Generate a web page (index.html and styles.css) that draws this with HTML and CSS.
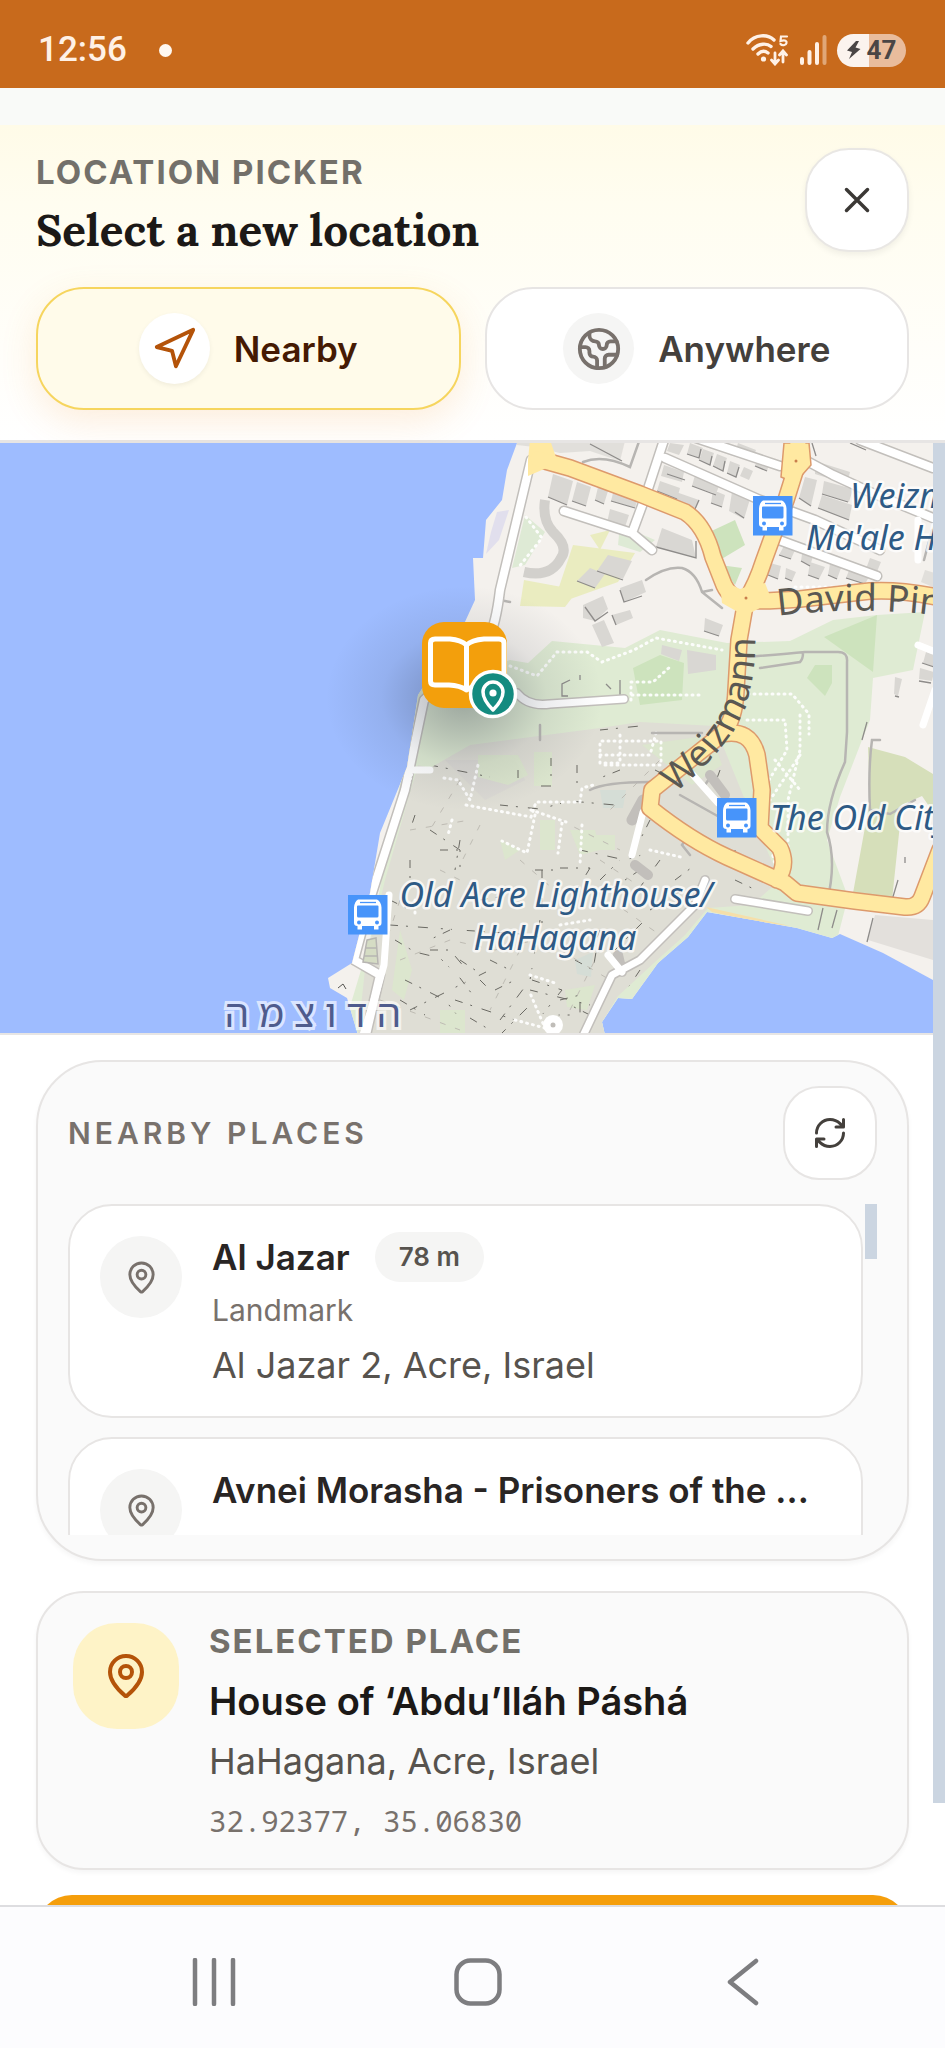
FILE: index.html
```html
<!DOCTYPE html>
<html lang="en">
<head>
<meta charset="utf-8">
<meta name="viewport" content="width=device-width, initial-scale=1">
<title>Select a new location</title>
<link rel="stylesheet" href="styles.css">
</head>
<body>
<div class="app">
  <div class="status">
    <div class="status-left"><time>12:56</time><span class="status-dot"></span></div>
    <div class="status-right">
      <svg width="44" height="32" viewBox="0 0 44 32" fill="none" stroke="#fff1e6" stroke-width="3.4" stroke-linecap="round" aria-hidden="true">
        <path d="M2 9C9 0 22 0 28 6M7 15C13 9 21 9 25 12.500M12 20q5-5 10-1"/>
        <circle cx="17.500" cy="25" r="2.600" fill="#fff1e6" stroke="none"/>
        <path d="M29 19v10M25.500 26l3.500 4 3.500-4M37 28V18M33.500 21l3.500-4 3.500 4" stroke-width="2.800"/>
        <path d="M41 2.500h-6l-.5 4.500c5-1.500 6.500 0 6 2-.5 2.500-4.500 3-6 1" stroke-width="2.200"/>
      </svg>
      <svg width="27" height="30" viewBox="0 0 27 30" stroke="#fff1e6" stroke-width="4" stroke-linecap="round" aria-hidden="true">
        <path d="M2 24v4M9.500 17v11M17 9v19"/><path d="M24.500 2v26" opacity=".45"/>
      </svg>
      <div class="battery">
        <svg width="14" height="18" viewBox="0 0 14 18" aria-hidden="true"><path d="M9 0 0 9.500l5 1.500-3 7 11.500-10-5-1.500L12 0z" fill="#4a4545"/></svg>
        <span>47</span>
      </div>
    </div>
  </div>

  <header class="head">
    <div class="head-row">
      <div>
        <p class="eyebrow">LOCATION PICKER</p>
        <h1>Select a new location</h1>
      </div>
      <button class="close" type="button" aria-label="Close">
        <svg class="icon" width="42" height="42" viewBox="0 0 24 24"><path d="M18 6 6 18M6 6l12 12"/></svg>
      </button>
    </div>
    <div class="modes">
      <button class="mode active" type="button" aria-pressed="true">
        <span class="mode-icon"><svg class="icon" width="46" height="46" viewBox="0 0 24 24"><path d="M3 11 22 2 13 21 11 13z"/></svg></span>
        Nearby
      </button>
      <button class="mode" type="button" aria-pressed="false">
        <span class="mode-icon"><svg class="icon" width="46" height="46" viewBox="0 0 24 24"><path d="M21.540 15H17a2 2 0 0 0-2 2v4.540M7 3.340V5a3 3 0 0 0 3 3 2 2 0 0 1 2 2c0 1.100.9 2 2 2a2 2 0 0 0 2-2c0-1.100.9-2 2-2h3.170M11 21.950V18a2 2 0 0 0-2-2 2 2 0 0 1-2-2v-1a2 2 0 0 0-2-2H2.050"/><circle cx="12" cy="12" r="10"/></svg></span>
        Anywhere
      </button>
    </div>
  </header>

  <main class="scroll">
    <div class="content">
      <div class="map">
        <svg class="map-art" viewBox="0 443 933 590" preserveAspectRatio="xMidYMid slice" role="img" aria-label="Map of Acre">
          <defs>
            <g id="bus">
              <rect width="39.500" height="39.500" fill="#4794fa"/>
              <path fill="#fff" fill-rule="evenodd" d="M10 4.500h19q4 2 4.500 8V28q0 3-3 3v3.500h-4.500V31h-12v3.500H9.500V31q-3.500 0-3.500-3V12.500q.5-6 4-8zM9 11.500v9.500q0 1.500 1.500 1.500h18.500q1.500 0 1.500-1.500v-9.500q0-1-1-1H10q-1 0-1 1z"/>
              <path d="M12 7.500h16" stroke="#4794fa" stroke-width="1.300"/>
              <circle cx="11" cy="27.500" r="2" fill="#4794fa"/><circle cx="29" cy="27.500" r="2" fill="#4794fa"/>
            </g>
            <radialGradient id="shade"><stop offset="0" stop-color="#333c4c" stop-opacity=".4"/><stop offset=".3" stop-color="#333c4c" stop-opacity=".25"/><stop offset=".6" stop-color="#333c4c" stop-opacity=".09"/><stop offset="1" stop-color="#333c4c" stop-opacity="0"/></radialGradient>
            <clipPath id="town"><path d="M418 720 430 768 470 745 600 728 640 722 715 726 745 800 780 880 752 905 708 908 685 935 655 962 618 996 602 1022 605 1035H358L366 960 385 880z"/></clipPath>
            <clipPath id="land"><path d="M517 443 507 470 502 500 486 520 483 558H473L475 600 464 624 418 695 407 767 380 833 370 893 352 963 328 978 330 988 347 998 358 1035H605L602 1022 618 998 632 999 658 963 688 937 707 912 753 920 797 928 832 938 840 934 883 953 933 980V443z"/></clipPath>
            <path id="p-weiz" d="M675 793Q736 743 748 698T752 600"/>
            <path id="p-david" d="M778 616Q870 604 960 619"/>
            <path id="main" d="M538 459 570 468 640 494 685 512Q705 525 713 557L724 585Q730 598 746 604M798 440 797 465 786 500 764 560Q756 585 746 600M746 600Q760 602 800 599L870 591Q905 589 950 600M746 600 739 640 736 690Q735 720 722 734L652 790 650 808Q690 840 727 857L785 883 797 893 855 901 905 907Q918 908 922 897L940 850M722 734Q750 728 757 755L762 790 760 828 780 848Q788 865 777 880"/>
          </defs>
          <rect y="443" width="933" height="592" fill="#9ebcff"/>
          <g clip-path="url(#land)">
            <path d="M300 443H940V1040H300z" fill="#f4f1ed"/>
            <path d="M418 690 510 660 528 663 552 641 625 648 660 630 727 643 790 641 833 620 877 615 925 612 913 670 873 678 870 720 862 740 840 797 827 840 848 897 837 940 700 940 600 1040H340L370 940z" fill="#dfebd3"/>
            <path d="M418 765 430 768 470 745 600 728 640 722 715 726 745 800 780 880 752 905 708 908 685 935 655 962 618 996 602 1022 605 1035H358L366 960 385 880z" fill="#dfded5"/>
            <path d="M877 615 824 637 873 672zM640 705 633 668 660 655 684 663 682 700zM703 535 735 520 745 545 720 560zM720 565 742 568 735 585zM807 678l8-13h17v18l-7 13z" fill="#cde3bd"/>
            <path d="M525 515 545 532 525 565 512 568zM620 525 655 540 640 552 618 545z" fill="#deead5"/>
            <path d="M573 545 635 553 618 582 562 602 558 590zM524 580 578 590 565 607 520 606zM590 535 610 530 600 550z" fill="#eaecc0"/>
            <path d="M868 747 905 757 933 774V812L922 796 902 805 892 900 853 893 870 800z" fill="#d6dfba"/>
            <path d="M875 915 933 920V960L868 940z" fill="#e3e0dc"/>
            <path d="M706 907 790 926 758 922 712 912z" fill="#f5dfaa"/>
            <path d="M497 512l12-2-10 30-13 14 5-22z" fill="#e1dfed"/>
            <g fill="#d9d7d3">
              <path d="M553 474l20 7-6 24-19-8zM577 482l14 5-5 19-14-5zM598 487l10 4-4 13-9-4zM614 489l24 8-3 11-24-7zM664 465l20 7-2 10-21-6zM660 481l20 7-3 11-20-8zM695 475l25 8-4 11-24-8zM690 443l13 5-4 10-12-4zM703 449l11 4-4 12-11-5zM717 454l10 4-4 13-10-5zM730 461l10 4-4 12-9-4zM744 467l9 4-4 9-9-4zM670 443l14 2-5 10-12-4zM738 443l18 7-4 11-17-8zM759 454l12 4-4 13-12-5zM676 492l23 8-4 10-23-9zM713 490l12 5-3 12-11-4zM732 492l18 7-6 20-15-8zM805 477l12 3-6 26-12-8zM824 481l29 8-4 13-27-8zM822 495l30 10-3 15-31-12zM784 546l11 4-4 9-12-4zM803 548l11 5-4 13-9-5zM810 562l15 5-6 12-11-4zM830 564l11 4-4 11-9-4zM850 568l20 7-5 9-19-6zM870 558l11 4-5 12-10-5zM770 563l11 3-3 13-10-4zM786 568l10 4-4 9-7-3zM610 509l19 6-5 15-17-7zM662 528l30 12 4 18-40-11zM815 461 850 472 847 484 815 474zM590 568l15 6-10 14-18-7zM608 555l24 6-9 18-26-8zM620 588l22-8 4 12-22 10zM583 605l20-9 5 13-13 12-12-3zM612 615l18-5 3 8-17 7zM705 618l18 7-4 11-15-5zM592 625l12-5 10 23-12 4zM662 645l20 5-3 11-18-7zM687 650l29 5v15l-28 4zM895 677l7 2-4 17-4-2zM926 652l12 4-3 11-12-4zM920 668l14 4-2 9-13-2z"/>
              <path d="M500 443l10-2 115 0-5 20-30-10-30 2-25-6zM445 760h70l10 20-40 20zM925 570l20 6v16l-24-10z" opacity=".7"/>
            </g>
            <path d="M545 500q-3 20 8 32 16 15 8 26-10 20-37 14" fill="none" stroke="#d2d0cc" stroke-width="10"/>
            <g fill="none" stroke="#8e8c8a" stroke-width="1.300">
              <path d="M548 497l19 8M572 501l14 5M595 500l9 4M611 501l24 7M657 491l20 8M667 474l18 6M692 486l24 9M699 500l-4 9M687 454l12 4 2-9M699 460l11 5 2-9M713 466l10 5 2-10M727 473l9 4 3-10M755 466l12 5M672 501l22 9M711 503l11 4M735 512l9 6M799 498l12 8M822 494l26 8M818 508l31 12M779 555l12 4M801 561l9 5M808 575l11 4M828 575l9 4M846 578l19 6M866 569l10 5M768 575l10 4M785 578l7 3M607 523l17 7M656 547l40 11V541M623 580l-26-9M577 581l18 7M620 590l4 12 18-6M585 607l10 14 13-9M612 615l4 10M704 631l15 5M895 696l4 1M812 443l4 13M850 443l16 7M590 444l32 17M919 681l12 2M922 663l12 4M570 680l-8 4v12h6M580 675v5M606 684l5 5M620 680v17M862 740l5-18M898 880l-6 20M905 857v6M823 908l-5 22M837 910l-5 18M873 918l-6 24"/>
            </g>
            <g clip-path="url(#town)">
              <g fill="#dbe8cb"><path d="M534 752h18v34h-18zM478 755h40l10 20-20 10-30-8zM440 1010h25v25h-25zM565 990l30-5-8 25-20-3zM500 840l20 10-15 10zM540 820h15v30h-15zM570 830h25l5 20-20 5zM595 835h20v15h-20zM400 930l12 40-8 30-12-10zM642 745l70-10 10 30-30 20z" opacity=".75"/><path d="M575 960l18-8-2 25-14-3zM600 790h26l-3 18h-20z" fill="#d5ddd6"/></g>
              <g fill="none" stroke="#6a6963" stroke-width="1" stroke-dasharray="8 8 2 10 10 13 2 8 1 15">
                <path d="M430 765l60 12M518 770v15M551 758v28h-15M577 765v25M650 800l-15 40M660 860l-25 34M640 870l-30 20M560 868h30l-12 20M535 870h20M430 830l30 20v20M415 815l-5 15M460 840l-5 30M440 850h22M500 805l40 4 30-8 45 4M580 850l45 10 20-6M600 880l20-20M390 925l70 5 60 4M395 940l20 12 25 6 20 20 15 20M450 930l-25 12M405 980l40 20 20 25M410 1010l80-40M400 1000l25 15M430 950h20l15 18M460 960l15 10M455 1000l60 20M480 980l10 10M490 960l20 10M495 990l20-10M500 1020l30-40 10-60M532 980l30 10-20 25M560 1000l20-5v20h-25M575 960l18 10 5-30M530 990l60 15M590 1015l-20-10M500 1035l30-30M470 1018l20 12M542 870v60M600 930l-10 25M620 1000l20-30M615 950l30-30M650 910l40-25M675 880l20-15M690 900l12-20M735 880l25 12M700 760l25-15M655 770l20 10M720 770l-8 22M745 780v25M735 850v18M760 880v-12M600 730l40-4M520 735l50-5M480 900l25-4M620 770l-20 8M410 860v20M390 900l20 10M650 820l-10 20"/>
              </g>
              <g fill="none" stroke="#bebbb3" stroke-width="1" stroke-dasharray="6 10">
                <path d="M400 960l50-20 45 10 60-15M380 1000l80 30M440 870l50 25M520 860l40 35M480 825l-20 40M560 820l60 30M610 900l50 35M400 900l-20 60M560 950l50 30M600 860l45 30M520 950l-30 60M570 1010l30-60M460 780l-30 50M660 760l-50 50M410 830l60-10"/>
              </g>
            </g>
            <g fill="none" stroke="#fff" stroke-width="3" stroke-dasharray="1 5" stroke-linecap="round" opacity=".9">
              <path d="M510 666l27 10 20-24h30l15 10 32-12 22-12 66 12M632 695h72M631 700v-18h22l18-16M526 517l16 21-24 30M444 778l14 2 12 20 8-35M466 805l65 12 5-15h44l2-14 15-4M531 810l35 12M582 825l-2 40M535 815l-8 38-25-12M562 823l-4 30M452 820l-4 15M415 900v15M560 925l30-5M530 975l25 8M515 1020l30 8-15-35M650 850l35 8M600 755h50l6-22M620 735v28h-20v-22h61v24h-60M742 694h50l17 20v20M747 720h38l2 30-18 30-5 40 15 60M800 715v35l-12 50v60M775 760l25 30M800 755l-30 45M795 587h55"/>
            </g>
            <g fill="none" stroke="#b7b5b2" stroke-width="2.500" stroke-linecap="round">
              <path d="M646 580q20-14 36-12 14 4 20 24l20 16M702 592l10-2M745 657q40-3 60-5h33q10 0 9 10v70l-2 30q-18 40-18 70 10 30 0 70M760 668l40-6q3-3 3-9M583 462q20-8 47 5l12-34M500 600l10 2M590 790q15-8 60-8M652 733h50M685 770l18 18 8-12M680 795l50 28M540 725v15M880 740h-8q-4 30-2 70l20 4 25-14M924 560l8-30M690 855l-8-10 8-12"/>
            </g>
            <g fill="none" stroke="#c2bfbb" stroke-linecap="round" stroke-linejoin="round">
              <path d="M531 460 500 590Q496 624 488 640L424 700 405 790 372 893 354 960 380 975 366 1035M664 440 646 495 632 533M564 511 632 533 652 550M665 458 760 500 815 520 880 550M690 436 780 466M805 460 833 475 870 492 933 518M860 440 933 468M779 540 877 576M632 820 643 800" stroke-width="11"/>
              <path d="M517 693Q528 707 550 704L624 699M735 899 808 911M710 775l15 20M648 875 635 865M618 955 622 972M705 880 695 905 640 960 612 975 600 1000 582 1038" stroke-width="10"/>
            </g>
            <g fill="none" stroke="#fff" stroke-linecap="round" stroke-linejoin="round">
              <path d="M531 460 500 590Q496 624 488 640L424 700 405 790 372 893 354 960 380 975 366 1035M664 440 646 495 632 533M564 511 632 533 652 550M665 458 760 500 815 520 880 550M690 436 780 466M805 460 833 475 870 492 933 518M860 440 933 468M779 540 877 576" stroke-width="8"/>
              <path d="M517 693Q528 707 550 704L624 699M735 899 808 911M705 880 695 905 640 960 612 975 600 1000 582 1038M608 955 622 972M389 895l-5 70-7 25-14 45M693 775l25 28M643 812 632 855M410 770h20M918 520v40M918 645l15 6M935 690l-12 35" stroke-width="7"/>
            </g>
            <path d="M413 770 374 892" stroke="#fff" stroke-width="3" stroke-dasharray="2 2"/>
            <use href="#main" fill="none" stroke="#dd9a6c" stroke-width="18" stroke-linecap="round" stroke-linejoin="round"/>
            <g fill="#ffe9a1">
              <path d="M530 440h20l8 23-30 13v-16z"/>
              <path d="M784 443h25l2 22-16 18-14-6z" stroke="#dd9a6c" stroke-width="1.500"/>
              <path d="M720 583l8 0 12 6 12-4 13-2 7 18-14 8-12 6-10-4-14-8z"/>
            </g>
            <use href="#main" fill="none" stroke="#ffe9a1" stroke-width="15" stroke-linecap="round" stroke-linejoin="round"/>
            <circle cx="746" cy="598" r="1.500" fill="#c97e4c"/><circle cx="796" cy="461" r="1.500" fill="#c97e4c"/>
            <circle cx="553" cy="1025" r="10" fill="#fff"/><circle cx="553" cy="1025" r="2.500" fill="#c0bdb8"/>
            <path d="M367 940l9-2 2 26-15-2zM365 948h12M364 956h13" fill="#d5dcc4" stroke="#b7b5b2" stroke-width="1.500"/>
            <path d="M338 988l5-4 3 5" fill="none" stroke="#565551"/>
          </g>
          <ellipse cx="464" cy="698" rx="138" ry="112" fill="url(#shade)"/>
          <use href="#bus" x="753" y="496"/><use href="#bus" x="717" y="798"/><use href="#bus" x="348" y="895"/>
          <g class="road-label">
            <text><textPath href="#p-david">David Pinsky</textPath></text>
            <text><textPath href="#p-weiz">Weizmann</textPath></text>
          </g>
          <g class="stop-label">
            <text x="850" y="508">Weizmann</text>
            <text x="806" y="550">Ma'ale Ha</text>
            <text x="770" y="830">The Old City</text>
            <text x="556" y="907" text-anchor="middle">Old Acre Lighthouse/</text>
            <text x="555" y="950" text-anchor="middle">HaHagana</text>
          </g>
          <text class="area-label" x="318" y="1027" text-anchor="middle">הדוצמה</text>
          <g>
            <rect x="422" y="622" width="85" height="86" rx="22" fill="#f39f0c"/>
            <path d="M466.500 645Q461 640 450 639H435Q430.500 639 430.500 643V681Q430.500 685 435 685H449Q460 685.500 466.500 690Q473 685.500 484 685H499Q504 685 504 681V643Q504 639 499 639H484Q472 640 466.500 645V690" fill="none" stroke="#fff" stroke-width="5" stroke-linejoin="round" stroke-linecap="round"/>
            <circle cx="493" cy="694" r="22.500" fill="#148b80" stroke="#fff" stroke-width="3.500"/>
            <path d="M493 710Q483 700 483 692A10 10 0 0 1 503 692Q503 700 493 710z" fill="none" stroke="#fff" stroke-width="3.500" stroke-linejoin="round"/>
            <circle cx="493" cy="693" r="3.600" fill="#fff"/>
          </g>
        </svg>
      </div>

      <div class="panel">
        <section class="card nearby" aria-labelledby="nearby-title">
          <div class="nearby-head">
            <h2 id="nearby-title">NEARBY PLACES</h2>
            <button class="refresh" type="button" aria-label="Refresh">
              <svg class="icon" width="36" height="36" viewBox="0 0 24 24"><path d="M3 12a9 9 0 0 1 9-9 9.750 9.750 0 0 1 6.740 2.740L21 8M21 3v5h-5M21 12a9 9 0 0 1-9 9 9.750 9.750 0 0 1-6.740-2.740L3 16M8 16H3v5"/></svg>
            </button>
          </div>
          <div class="list-wrap">
            <div class="list">
              <button class="place" type="button">
                <span class="place-icon"><svg class="icon" width="35" height="35" viewBox="0 0 24 24"><path d="M20 10c0 4.990-5.540 10.190-7.400 11.800a1 1 0 0 1-1.200 0C9.540 20.190 4 14.990 4 10a8 8 0 0 1 16 0"/><circle cx="12" cy="10" r="3"/></svg></span>
                <span class="place-text">
                  <span class="place-top"><span class="place-name">Al Jazar</span><span class="badge">78 m</span></span>
                  <span class="place-kind">Landmark</span>
                  <span class="place-addr">Al Jazar 2, Acre, Israel</span>
                </span>
              </button>
              <button class="place" type="button">
                <span class="place-icon"><svg class="icon" width="35" height="35" viewBox="0 0 24 24"><path d="M20 10c0 4.990-5.540 10.190-7.400 11.800a1 1 0 0 1-1.200 0C9.540 20.190 4 14.990 4 10a8 8 0 0 1 16 0"/><circle cx="12" cy="10" r="3"/></svg></span>
                <span class="place-text">
                  <span class="place-top"><span class="place-name">Avnei Morasha - Prisoners of the ...</span></span>
                </span>
              </button>
            </div>
            <div class="list-bar"></div>
          </div>
        </section>

        <section class="card selected">
          <div class="selected-icon"><svg class="icon" width="48" height="48" viewBox="0 0 24 24"><path d="M20 10c0 4.990-5.540 10.190-7.400 11.800a1 1 0 0 1-1.200 0C9.540 20.190 4 14.990 4 10a8 8 0 0 1 16 0"/><circle cx="12" cy="10" r="3"/></svg></div>
          <div>
            <p class="eyebrow">SELECTED PLACE</p>
            <h2 class="selected-name">House of ‘Abdu’lláh Páshá</h2>
            <p class="selected-addr">HaHagana, Acre, Israel</p>
            <p class="coords">32.92377, 35.06830</p>
          </div>
        </section>
        <button class="confirm" type="button" aria-label="Confirm"></button>
      </div>
    </div>
    <div class="track"><div class="thumb"></div></div>
  </main>

  <nav class="navbar" aria-label="System">
    <button type="button" aria-label="Recents"><svg width="48" height="48" viewBox="0 0 48 48"><path d="M5 2v44M24 2v44M43 2v44"/></svg></button>
    <button type="button" aria-label="Home"><svg width="48" height="48" viewBox="0 0 48 48"><rect x="2.500" y="2.500" width="43" height="43" rx="14"/></svg></button>
    <button type="button" aria-label="Back"><svg width="48" height="48" viewBox="0 0 48 48"><path d="M37 3 11 24l26 21"/></svg></button>
  </nav>
</div>
</body>
</html>
```
FILE: styles.css
```css
* { box-sizing: border-box; }
body { margin: 0; background: #fff; color: #1c1917; font-family: Inter, "Liberation Sans", sans-serif; }
button { font: inherit; color: inherit; margin: 0; padding: 0; border: 0; background: none; }
h1, h2, p { margin: 0; }
svg { display: block; flex: none; }
.icon { fill: none; stroke: currentColor; stroke-width: 2; stroke-linecap: round; stroke-linejoin: round; }

.app { display: flex; flex-direction: column; height: 100vh; overflow: hidden; }

.status { flex: none; display: flex; justify-content: space-between; align-items: center; height: 88px; padding: 12px 39px 0 38px; background: #c86a1c; color: #fff1e6; }
.status-left { display: flex; align-items: center; gap: 32px; font: 500 35px/42px Roboto, sans-serif; }
.status-dot { width: 13px; height: 13px; border-radius: 50%; background: #fff8f0; }
.status-right { display: flex; align-items: center; gap: 10px; }
.battery { display: flex; align-items: center; justify-content: center; gap: 6px; width: 69px; height: 33px; border-radius: 17px; background: linear-gradient(90deg, #fbf3ee 47%, #e9bc9c 47%); color: #4a4545; font: 700 26px/33px Roboto, sans-serif; }

.head { flex: none; border-top: 37px solid #f9faf8; border-bottom: 3px solid #e7e5e4; padding: 23px 36px 30px; background: linear-gradient(#fffbe8, #fffdf0 25%, #fffefa 75%, #fff); }
.head-row { display: flex; justify-content: space-between; align-items: flex-start; margin-bottom: 29px; }
.eyebrow { color: #73706a; font-size: 33px; font-weight: 700; letter-spacing: 2px; line-height: 36px; }
.head .eyebrow { margin-top: 6px; margin-bottom: 12px; }
h1 { font: 700 44px/56px Lora, "Liberation Serif", serif; }
.close { display: grid; place-items: center; width: 104px; height: 104px; border: 2px solid #e9e7e4; border-radius: 44px; background: #fff; color: #3b3835; box-shadow: 0 3px 6px rgba(0, 0, 0, .06); }
.modes { display: grid; grid-template-columns: 1fr 1fr; gap: 24px; }
.mode { display: flex; align-items: center; justify-content: center; gap: 24px; height: 123px; border: 2px solid #e7e5e4; border-radius: 48px; background: #fff; color: #44403c; font-size: 35px; font-weight: 600; }
.mode.active { border-color: #f6d55e; background: #fffbea; color: #451a03; box-shadow: 0 12px 36px rgba(240, 150, 50, .16); }
.mode-icon { display: grid; place-items: center; width: 71px; height: 71px; border-radius: 50%; background: #f5f5f4; color: #78716c; }
.active .mode-icon { background: #fff; color: #b45309; box-shadow: 0 2px 5px rgba(0, 0, 0, .06); }

.scroll { flex: 1; min-height: 0; display: flex; overflow: hidden; }
.content { flex: 1; min-width: 0; }
.track { width: 12px; flex: none; }
.thumb { height: 93%; background: #cbd5e1; }

.map { height: 592px; overflow: hidden; border-bottom: 2px solid #e7e5e4; }
.map-art { width: 100%; height: 100%; }
.stop-label { font: italic 400 34px "Noto Sans", sans-serif; fill: #2e5a85; stroke: #fff; stroke-opacity: .75; stroke-width: 5px; stroke-linejoin: round; paint-order: stroke; }
.road-label { font: 400 37px "Noto Sans", sans-serif; fill: #5a5853; }
.area-label { font: 400 38px "Noto Sans", "Noto Sans Hebrew", "Open Sans", "DejaVu Sans", sans-serif; letter-spacing: 10px; fill: #4e5b8d; stroke: #fff; stroke-opacity: .65; stroke-width: 6px; paint-order: stroke; }

.panel { padding: 25px 24px 0 36px; }
.card { border: 2px solid #e7e5e4; background: #fafafa; box-shadow: 0 3px 5px rgba(0, 0, 0, .04); }
.nearby { padding: 24px 30px; border-radius: 66px; margin-bottom: 30px; }
.nearby-head { display: flex; align-items: center; justify-content: space-between; margin-bottom: 24px; }
.nearby-head h2 { color: #78716c; font-size: 30px; font-weight: 600; letter-spacing: 4px; line-height: 40px; }
.refresh { display: grid; place-items: center; width: 94px; height: 94px; border: 2px solid #e7e5e4; border-radius: 36px; background: #fff; color: #44403c; }
.list-wrap { display: flex; gap: 2px; height: 331px; overflow: hidden; }
.list { flex: 1; min-width: 0; display: flex; flex-direction: column; gap: 19px; }
.list-bar { width: 12px; height: 55px; background: #cbd5e1; }
.place { flex: none; display: flex; align-items: flex-start; gap: 30px; padding: 25px 30px 23px; border: 2px solid #e7e5e4; border-radius: 44px; background: #fff; text-align: left; }
.place-icon { flex: none; display: grid; place-items: center; width: 82px; height: 82px; margin-top: 5px; border-radius: 50%; background: #f5f5f4; color: #78716c; }
.place-text { display: flex; flex-direction: column; min-width: 0; }
.place-top { display: flex; align-items: center; gap: 25px; height: 52px; }
.place-name { color: #292524; font-size: 35px; font-weight: 600; white-space: nowrap; }
.badge { padding: 0 24px; border-radius: 26px; background: #f5f5f4; color: #57534e; font-size: 26px; font-weight: 600; line-height: 50px; }
.place-kind { color: #78716c; font-size: 30px; line-height: 54px; }
.place-addr { color: #57534e; font-size: 36px; line-height: 56px; }

.selected { display: flex; align-items: flex-start; gap: 30px; padding: 30px 35px 17px; border-radius: 48px; margin-bottom: 25px; }
.selected-icon { flex: none; display: grid; place-items: center; width: 106px; height: 106px; border-radius: 44px; background: #fef3c7; color: #b45309; }
.selected .eyebrow { margin-bottom: 12px; }
.selected-name { font-size: 38px; font-weight: 600; line-height: 60px; }
.selected-addr { color: #57534e; font-size: 36px; line-height: 60px; }
.coords { color: #78716c; font: 29px/60px "Noto Sans Mono", "Droid Sans Mono", "DejaVu Sans Mono", monospace; }
.confirm { display: block; width: 100%; height: 110px; border-radius: 36px; background: #f59e0b; }

.navbar { flex: none; display: grid; grid-template-columns: repeat(3, 1fr); align-items: center; height: 143px; padding: 8px 70px 0 82px; border-top: 2px solid #dddde0; background: #fcfcfe; }
.navbar button { display: grid; place-items: center; }
.navbar svg { fill: none; stroke: #7d7d80; stroke-width: 4.500; stroke-linecap: round; stroke-linejoin: round; }
```
